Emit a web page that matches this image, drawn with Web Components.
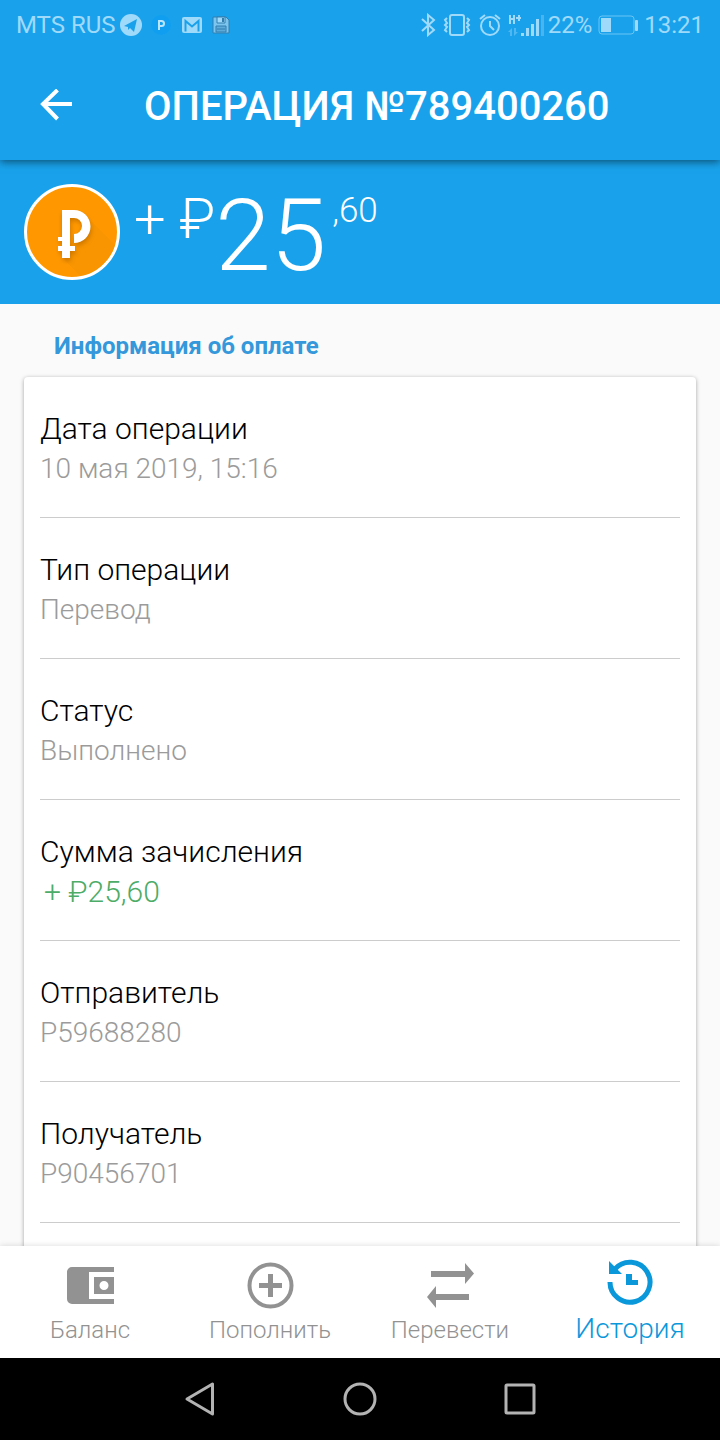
<!DOCTYPE html>
<html lang="ru">
<head>
<meta charset="utf-8">
<meta name="viewport" content="width=device-width, initial-scale=1">
<title>Операция №789400260</title>
<style>
html, body { margin: 0; height: 100%; }
body { font-family: Roboto, "Noto Sans", sans-serif; font-weight: 300; color: #000; background: #fafafa; }
</style>
</head>
<body>
<payment-screen>
  <status-bar slot="status"></status-bar>
  <app-header slot="header">ОПЕРАЦИЯ №789400260</app-header>
  <amount-hero slot="hero" currency="+ ₽" whole="25" fraction=",60"></amount-hero>
  <info-section>
    <span slot="heading">Информация об оплате</span>
    <info-row><span slot="label">Дата операции</span>10 мая 2019, 15:16</info-row>
    <info-row><span slot="label">Тип операции</span>Перевод</info-row>
    <info-row><span slot="label">Статус</span>Выполнено</info-row>
    <info-row income><span slot="label">Сумма зачисления</span>+ ₽25,60</info-row>
    <info-row><span slot="label">Отправитель</span>P59688280</info-row>
    <info-row><span slot="label">Получатель</span>P90456701</info-row>
  </info-section>
  <tab-bar slot="tabs">
    <tab-item icon="wallet">Баланс</tab-item>
    <tab-item icon="add">Пополнить</tab-item>
    <tab-item icon="swap">Перевести</tab-item>
    <tab-item icon="history" active>История</tab-item>
  </tab-bar>
  <system-nav slot="system"></system-nav>
</payment-screen>

<script>
class Base extends HTMLElement {
  connectedCallback() {
    if (this.shadowRoot) return;
    const t = document.createElement('template');
    t.innerHTML = this.view();
    this.attachShadow({ mode: 'open' }).append(t.content.cloneNode(true));
  }
}

customElements.define('payment-screen', class extends Base {
  view() { return `
    <style>
      :host { display: flex; flex-direction: column; height: 100vh; background: #fafafa; }
      main { flex: 1; min-height: 0; overflow: hidden; }
    </style>
    <slot name="status"></slot>
    <slot name="header"></slot>
    <main><slot name="hero"></slot><slot></slot></main>
    <slot name="tabs"></slot>
    <slot name="system"></slot>`; }
});

customElements.define('status-bar', class extends Base {
  view() { return `
    <style>
      :host { display: flex; align-items: center; justify-content: space-between; position: relative; z-index: 2;
        height: 50px; padding: 0 16px; background: #19a2eb; color: #a0dafa; font-size: 24px; font-weight: 400; line-height: 32px; }
      div { display: flex; align-items: center; }
      .left svg + svg { margin-left: 8px; }
      .left .badge + svg, .left .disk { margin-left: 10px; }
      .left svg + .badge { margin-left: 4px; }
      svg { display: block; flex: none; }
      .right { gap: 6px; }
      .right .signal + span { margin-left: -2px; }
    </style>
    <div class="left">
      <span>MTS RUS</span>
      <svg width="30" height="24" viewBox="0 0 30 24"><circle cx="15" cy="12" r="11" fill="#a0dafa"/><path d="M8 13 21 6l-3 13-4-4-2 2v-3z" fill="#19a2eb"/></svg>
      <svg class="badge" width="22" height="22" viewBox="0 0 22 22"><circle cx="11" cy="11" r="10" fill="#109ff0"/><path d="M9 16V7h2.500a2.500 2.500 0 0 1 0 5H9" fill="none" stroke="#bce5fb" stroke-width="2"/></svg>
      <svg width="20" height="16" viewBox="0 0 20 16"><rect width="20" height="16" rx="2" fill="#a0dafa"/><path d="M3.500 14.500V4L10 9.500 16.500 4v10.500" fill="none" stroke="#19a2eb" stroke-width="2"/></svg>
      <svg class="disk" width="18" height="18" viewBox="0 0 18 18"><path d="M1 1h13l3 3v13H1z" fill="#7cc5ee" stroke="#327faf"/><path d="M5 1h8v6H5z" fill="#a0dafa" stroke="#327faf"/><path d="M10 2h2v4h-2z" fill="#327faf"/><path d="M4 10h10v6H4z" fill="#5cabd9" stroke="#327faf"/><path d="M5 13h8" stroke="#327faf"/></svg>
    </div>
    <div class="right">
      <svg width="16" height="24" viewBox="0 0 16 24" fill="none" stroke="#a0dafa" stroke-width="2"><path d="m2 6 12 11-6 5V2l6 5L2 18"/></svg>
      <svg width="30" height="24" viewBox="0 0 30 24" fill="none" stroke="#a0dafa" stroke-width="2"><rect x="8" y="2" width="14" height="20" rx="2"/><path d="m5 5-2 2 2 3-2 2 2 2-2 3 2 2M25 5l2 2-2 3 2 2-2 2 2 3-2 2"/></svg>
      <svg width="24" height="24" viewBox="0 0 24 24" fill="none" stroke="#a0dafa" stroke-width="2"><circle cx="12" cy="13" r="9"/><path d="M12 8v5l4 4M2 6l5-4M22 6l-5-4"/></svg>
      <svg class="signal" width="36" height="24" viewBox="0 0 36 24" fill="#a0dafa"><path d="M1 2h2v3h2V2h2v9H5V7H3v4H1zM8 4h2V2h2v2h1v2h-1v2h-2V6H8z"/><path d="m0 19 4-4v8H2v-4zM6 15h2v4h2l-4 4z" opacity=".4"/><rect x="13" y="20" width="3" height="3"/><rect x="18" y="15" width="3" height="8"/><rect x="23" y="11" width="3" height="12"/><rect x="28" y="6" width="3" height="17"/><rect x="33" y="2" width="3" height="21" opacity=".35"/></svg>
      <span>22%</span>
      <svg width="40" height="20" viewBox="0 0 40 20"><rect x="1" y="1" width="35" height="18" rx="3" fill="none" stroke="#6bc4f4"/><rect x="3" y="3" width="10" height="14" fill="#a0dafa"/><rect x="37" y="5" width="3" height="11" rx="1" fill="#a0dafa"/></svg>
      <span>13:21</span>
    </div>`; }
});

customElements.define('app-header', class extends Base {
  view() { return `
    <style>
      :host { display: block; position: relative; z-index: 1; background: #19a2eb; color: #fff; box-shadow: 0 2px 8px rgba(0,0,0,.5); }
      header { display: flex; align-items: center; height: 110px; }
      button { width: 112px; height: 110px; padding: 0; border: 0; background: none; color: inherit; flex: none; }
      svg { display: block; margin: 0 auto; }
      h1 { margin: 0; padding: 4px 0 0 32px; font-size: 40px; line-height: 48px; font-weight: 500; white-space: nowrap; }
    </style>
    <header>
      <button aria-label="Назад"><svg width="32" height="32" viewBox="0 0 32 32" fill="none" stroke="#fff" stroke-width="4"><path d="M32 15H3M17.500 1 3 15l14.500 15"/></svg></button>
      <h1><slot></slot></h1>
    </header>`; }
});

customElements.define('amount-hero', class extends Base {
  view() { return `
    <style>
      :host { display: flex; align-items: flex-start; height: 120px; padding: 24px 24px 0; background: #19a2eb; color: #fff; }
      svg { display: block; flex: none; margin-right: 14px; }
      p { display: flex; margin: 2px 0 0; }
      .currency { font-size: 56px; line-height: 66px; }
      .whole { font-size: 100px; line-height: 100px; }
      .fraction { margin-left: 6px; font-size: 35px; line-height: 50px; }
    </style>
    <svg width="96" height="96" viewBox="0 0 96 96">
      <defs><filter id="soft" x="-50%" y="-50%" width="200%" height="200%"><feGaussianBlur stdDeviation="2"/></filter></defs>
      <circle cx="48" cy="48" r="46.500" fill="#ff9800" stroke="#fff" stroke-width="3"/>
      <path d="m62 32 29 29A45 45 0 0 1 56 92L39 74z" fill="#f39200" opacity=".6"/>
      <path transform="translate(1 3)" filter="url(#soft)" opacity=".5" fill="#a65d00" d="M37 26h13a16.500 16.500 0 0 1 0 33v-9a8 8 0 0 0 0-16h-4v28h5v5h-5v7h-8v-7h-4v-5h4v-5h-4v-4h3z"/>
      <path fill="#fff" d="M38 26h12a16.500 16.500 0 0 1 0 33v-9a8 8 0 0 0 0-16h-4v28h5v5h-5v7h-8v-7h-4v-5h4v-5h-4v-4h4z"/>
    </svg>
    <p><span class="currency">${this.getAttribute('currency')}</span><span class="whole">${this.getAttribute('whole')}</span><span class="fraction">${this.getAttribute('fraction')}</span></p>`; }
});

customElements.define('info-section', class extends Base {
  view() { return `
    <style>
      :host { display: block; padding: 26px 24px; }
      h2 { margin: 0 30px 15px; color: #3498db; font-size: 24px; line-height: 32px; font-weight: 700; }
      section { padding: 0 16px 160px; border-radius: 4px; background: #fff; box-shadow: 0 1px 4px rgba(0,0,0,.35); }
    </style>
    <h2><slot name="heading"></slot></h2>
    <section><slot></slot></section>`; }
});

customElements.define('info-row', class extends Base {
  view() { return `
    <style>
      :host { display: block; padding: 32px 0 28px; border-bottom: 1px solid #ccc; color: #9b9b9b; font-size: 28px; line-height: 40px; }
      :host([income]) { color: #4cac68; font-size: 30px; }
      :host([income]) .value { padding-left: 4px; }
      .label { color: #000; font-size: 30px; }
    </style>
    <div class="label"><slot name="label"></slot></div>
    <div class="value"><slot></slot></div>`; }
});

customElements.define('tab-bar', class extends Base {
  view() { return `
    <style>
      :host { display: block; position: relative; background: #fff; box-shadow: 0 0 6px rgba(0,0,0,.15); }
      nav { display: grid; grid-template-columns: repeat(4, 1fr); height: 112px; }
    </style>
    <nav><slot></slot></nav>`; }
});

const tabIcons = {
  wallet: '<path d="M7 5h42v5H24v27h25v5H7a5 5 0 0 1-5-5V10a5 5 0 0 1 5-5z"/><path fill-rule="evenodd" d="M29 15h20v17H29zm10 4a4.500 4.500 0 1 0 0 9 4.500 4.500 0 0 0 0-9z"/>',
  add: '<circle cx="25.500" cy="23.500" r="21" fill="none" stroke="currentColor" stroke-width="4"/><path d="M23 12h5v9h9v5h-9v9h-5v-9h-9v-5h9z"/>',
  swap: '<path d="M6 9h34V1l9 10.500L40 22v-7H6zM44 32H11v-8L2 35l9 11v-8h33z"/>',
  history: '<path d="M5 24a20 20 0 1 0 5-13" fill="none" stroke="currentColor" stroke-width="5"/><path d="M4 3v13h13zM21 16h6v6h6v5H21z"/>'
};

customElements.define('tab-item', class extends Base {
  view() { return `
    <style>
      :host { display: block; color: #929292; font-size: 24px; }
      :host([active]) { color: #0a98db; font-size: 28px; }
      button { display: flex; flex-direction: column; align-items: center; width: 100%; height: 100%; padding: 16px 0 0;
        border: 0; background: none; color: inherit; font: inherit; line-height: 32px; }
      :host([active]) button { padding-top: 12px; }
      svg { display: block; margin-bottom: 4px; fill: currentColor; }
      :host([active]) svg { margin-bottom: 7px; }
    </style>
    <button><svg width="50" height="48" viewBox="0 0 50 48">${tabIcons[this.getAttribute('icon')]}</svg><slot></slot></button>`; }
});

customElements.define('system-nav', class extends Base {
  view() { return `
    <style>
      :host { display: flex; align-items: center; justify-content: center; gap: 112px; height: 82px; background: #000; }
      button { width: 48px; height: 48px; padding: 0; border: 0; background: none; }
      svg { display: block; margin: auto; fill: none; stroke: #b3b3b3; stroke-width: 3; stroke-linejoin: round; }
    </style>
    <button aria-label="Назад"><svg width="36" height="36" viewBox="0 0 36 36"><path d="M30.500 3v30L5 18z"/></svg></button>
    <button aria-label="Домой"><svg width="36" height="36" viewBox="0 0 36 36"><circle cx="18" cy="18" r="15"/></svg></button>
    <button aria-label="Недавние"><svg width="36" height="36" viewBox="0 0 36 36"><rect x="4" y="4" width="28" height="28" rx="1"/></svg></button>`; }
});
</script>
</body>
</html>
